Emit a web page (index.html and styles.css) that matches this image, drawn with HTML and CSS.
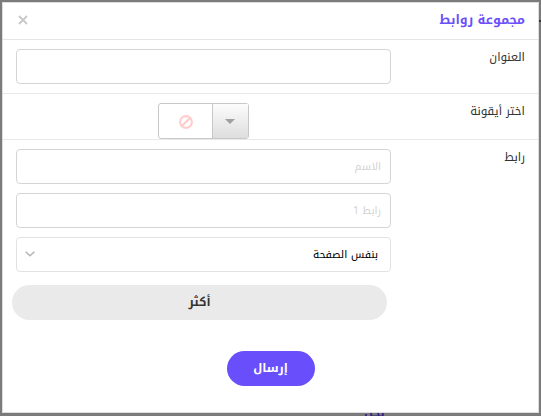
FILE: index.html
```
<!DOCTYPE html>
<html lang="ar" dir="rtl">

<head>
  <meta charset="UTF-8">
  <title>مجموعة روابط</title>
  <link rel="stylesheet" href="styles.css">
</head>

<body>
  <div class="page-text">نحن</div>
  <div class="page-line"></div>
  <form class="modal">
    <div class="modal-header">
      <h2>مجموعة روابط</h2>
      <svg class="close" viewBox="0 0 10 10"><path d="M1 1l8 8M9 1l-8 8" /></svg>
    </div>

    <div class="row row-title">
      <label>العنوان</label>
      <div class="field"><input type="text"></div>
    </div>

    <div class="row row-icon">
      <label>اختر أيقونة</label>
      <div class="field picker-field">
        <div class="picker">
          <span class="picker-icon">
            <svg width="14" height="14" viewBox="0 0 14 14"><circle cx="7" cy="7" r="5.9" /><path d="M2.9 11.1l8.2-8.2" /></svg>
          </span>
          <span class="picker-toggle"><i class="caret"></i></span>
        </div>
      </div>
    </div>

    <div class="row row-link">
      <label>رابط</label>
      <div class="field">
        <input type="text" placeholder="الاسم">
        <input type="text" placeholder="رابط 1">
        <div class="select">
          <span>بنفس الصفحة</span>
          <svg width="10" height="6" viewBox="0 0 10 6"><path d="M.7.7L5 4.8 9.3.7" /></svg>
        </div>
        <button type="button" class="more">أكثر</button>
      </div>
    </div>

    <div class="actions">
      <button type="button" class="submit">إرسال</button>
    </div>
  </form>
</body>

</html>
```
FILE: styles.css
```
* {
  box-sizing: border-box;
}

body {
  margin: 0;
  padding: 2px 2px 3px;
  height: 416px;
  overflow: hidden;
  background: #7b7b7b;
  color: #333;
  font-family: "Noto Kufi Arabic", "Noto Sans Arabic", "DejaVu Sans", sans-serif;
  font-size: 11.7px;
}

/* page behind the modal */
.page-text {
  position: absolute;
  left: 364px;
  top: 405px;
  line-height: 16px;
  font-weight: bold;
  color: #2d2383;
}

.page-line {
  position: absolute;
  right: 0;
  top: 20px;
  width: 2px;
  height: 2px;
  background: #333;
}

.modal {
  position: relative;
  width: 537px;
  height: 411px;
  background: #fff;
  border: 1px solid #ddd;
}

.modal-header {
  display: flex;
  justify-content: space-between;
  align-items: center;
  height: 37px;
  padding: 0 13px 2px 15px;
  border-bottom: 1px solid #e5e5e5;
}

.modal-header h2 {
  margin: 0;
  color: #6b4ffa;
  font-size: 12.6px;
}

.close {
  width: 10px;
  height: 10px;
  fill: none;
  stroke: #c8c8c8;
  stroke-width: 1.8;
}

.row {
  display: flex;
  justify-content: space-between;
  padding: 9px 13px 0;
  border-bottom: 1px solid #e9e9e9;
}

.row-title {
  height: 54px;
}

.row-icon {
  height: 46px;
}

.row-link {
  height: 181px;
  border-bottom: 0;
}

.row label {
  line-height: 16px;
}

.field {
  display: flex;
  flex-direction: column;
  gap: 9px;
  width: 375px;
}

input {
  width: 100%;
  height: 35px;
  padding: 0 9px;
  border: 1px solid #d5d5d5;
  border-radius: 4px;
  font-family: inherit;
  font-size: 10.5px;
}

input::placeholder {
  color: #d3d3d3;
}

.select {
  display: flex;
  justify-content: space-between;
  align-items: center;
  height: 35px;
  padding: 0 12px 0 8px;
  border: 1px solid #e2e2e2;
  border-radius: 4px;
  color: #000;
  font-size: 10.7px;
}

.select svg {
  margin-bottom: 2px;
  fill: none;
  stroke: #b5b5b5;
  stroke-width: 1.5;
}

.picker-field {
  align-items: flex-end;
  padding-left: 142px;
}

.picker {
  display: flex;
  direction: ltr;
  width: 91px;
  height: 36px;
  flex-shrink: 0;
  border: 1px solid #c8c8c8;
  border-radius: 3px;
  background: #fff;
}

.picker-icon,
.picker-toggle {
  display: flex;
  align-items: center;
  justify-content: center;
}

.picker-icon {
  width: 53px;
  padding-top: 2px;
}

.picker-icon svg {
  fill: none;
  stroke: #ffcdcd;
  stroke-width: 2.1;
}

.picker-toggle {
  flex: 1;
  padding-right: 1px;
  border-left: 1px solid #c8c8c8;
  background: linear-gradient(#fcfcfc, #dedede);
}

.caret {
  border: 5px solid transparent;
  border-top: 5px solid #a0a0a0;
  border-bottom: 0;
}

button {
  height: 35px;
  padding: 0 6px 1px;
  border: 0;
  border-radius: 18px;
  font-family: inherit;
  font-size: 11.8px;
  font-weight: bold;
}

.more {
  width: 375px;
  margin: 4px 4px 0 -4px;
  flex-shrink: 0;
  background: #eaeaea;
  color: #333;
}

.actions {
  display: flex;
  justify-content: center;
  padding-top: 30px;
}

.submit {
  width: 88px;
  background: #694ffb;
  color: #fff;
}
```
